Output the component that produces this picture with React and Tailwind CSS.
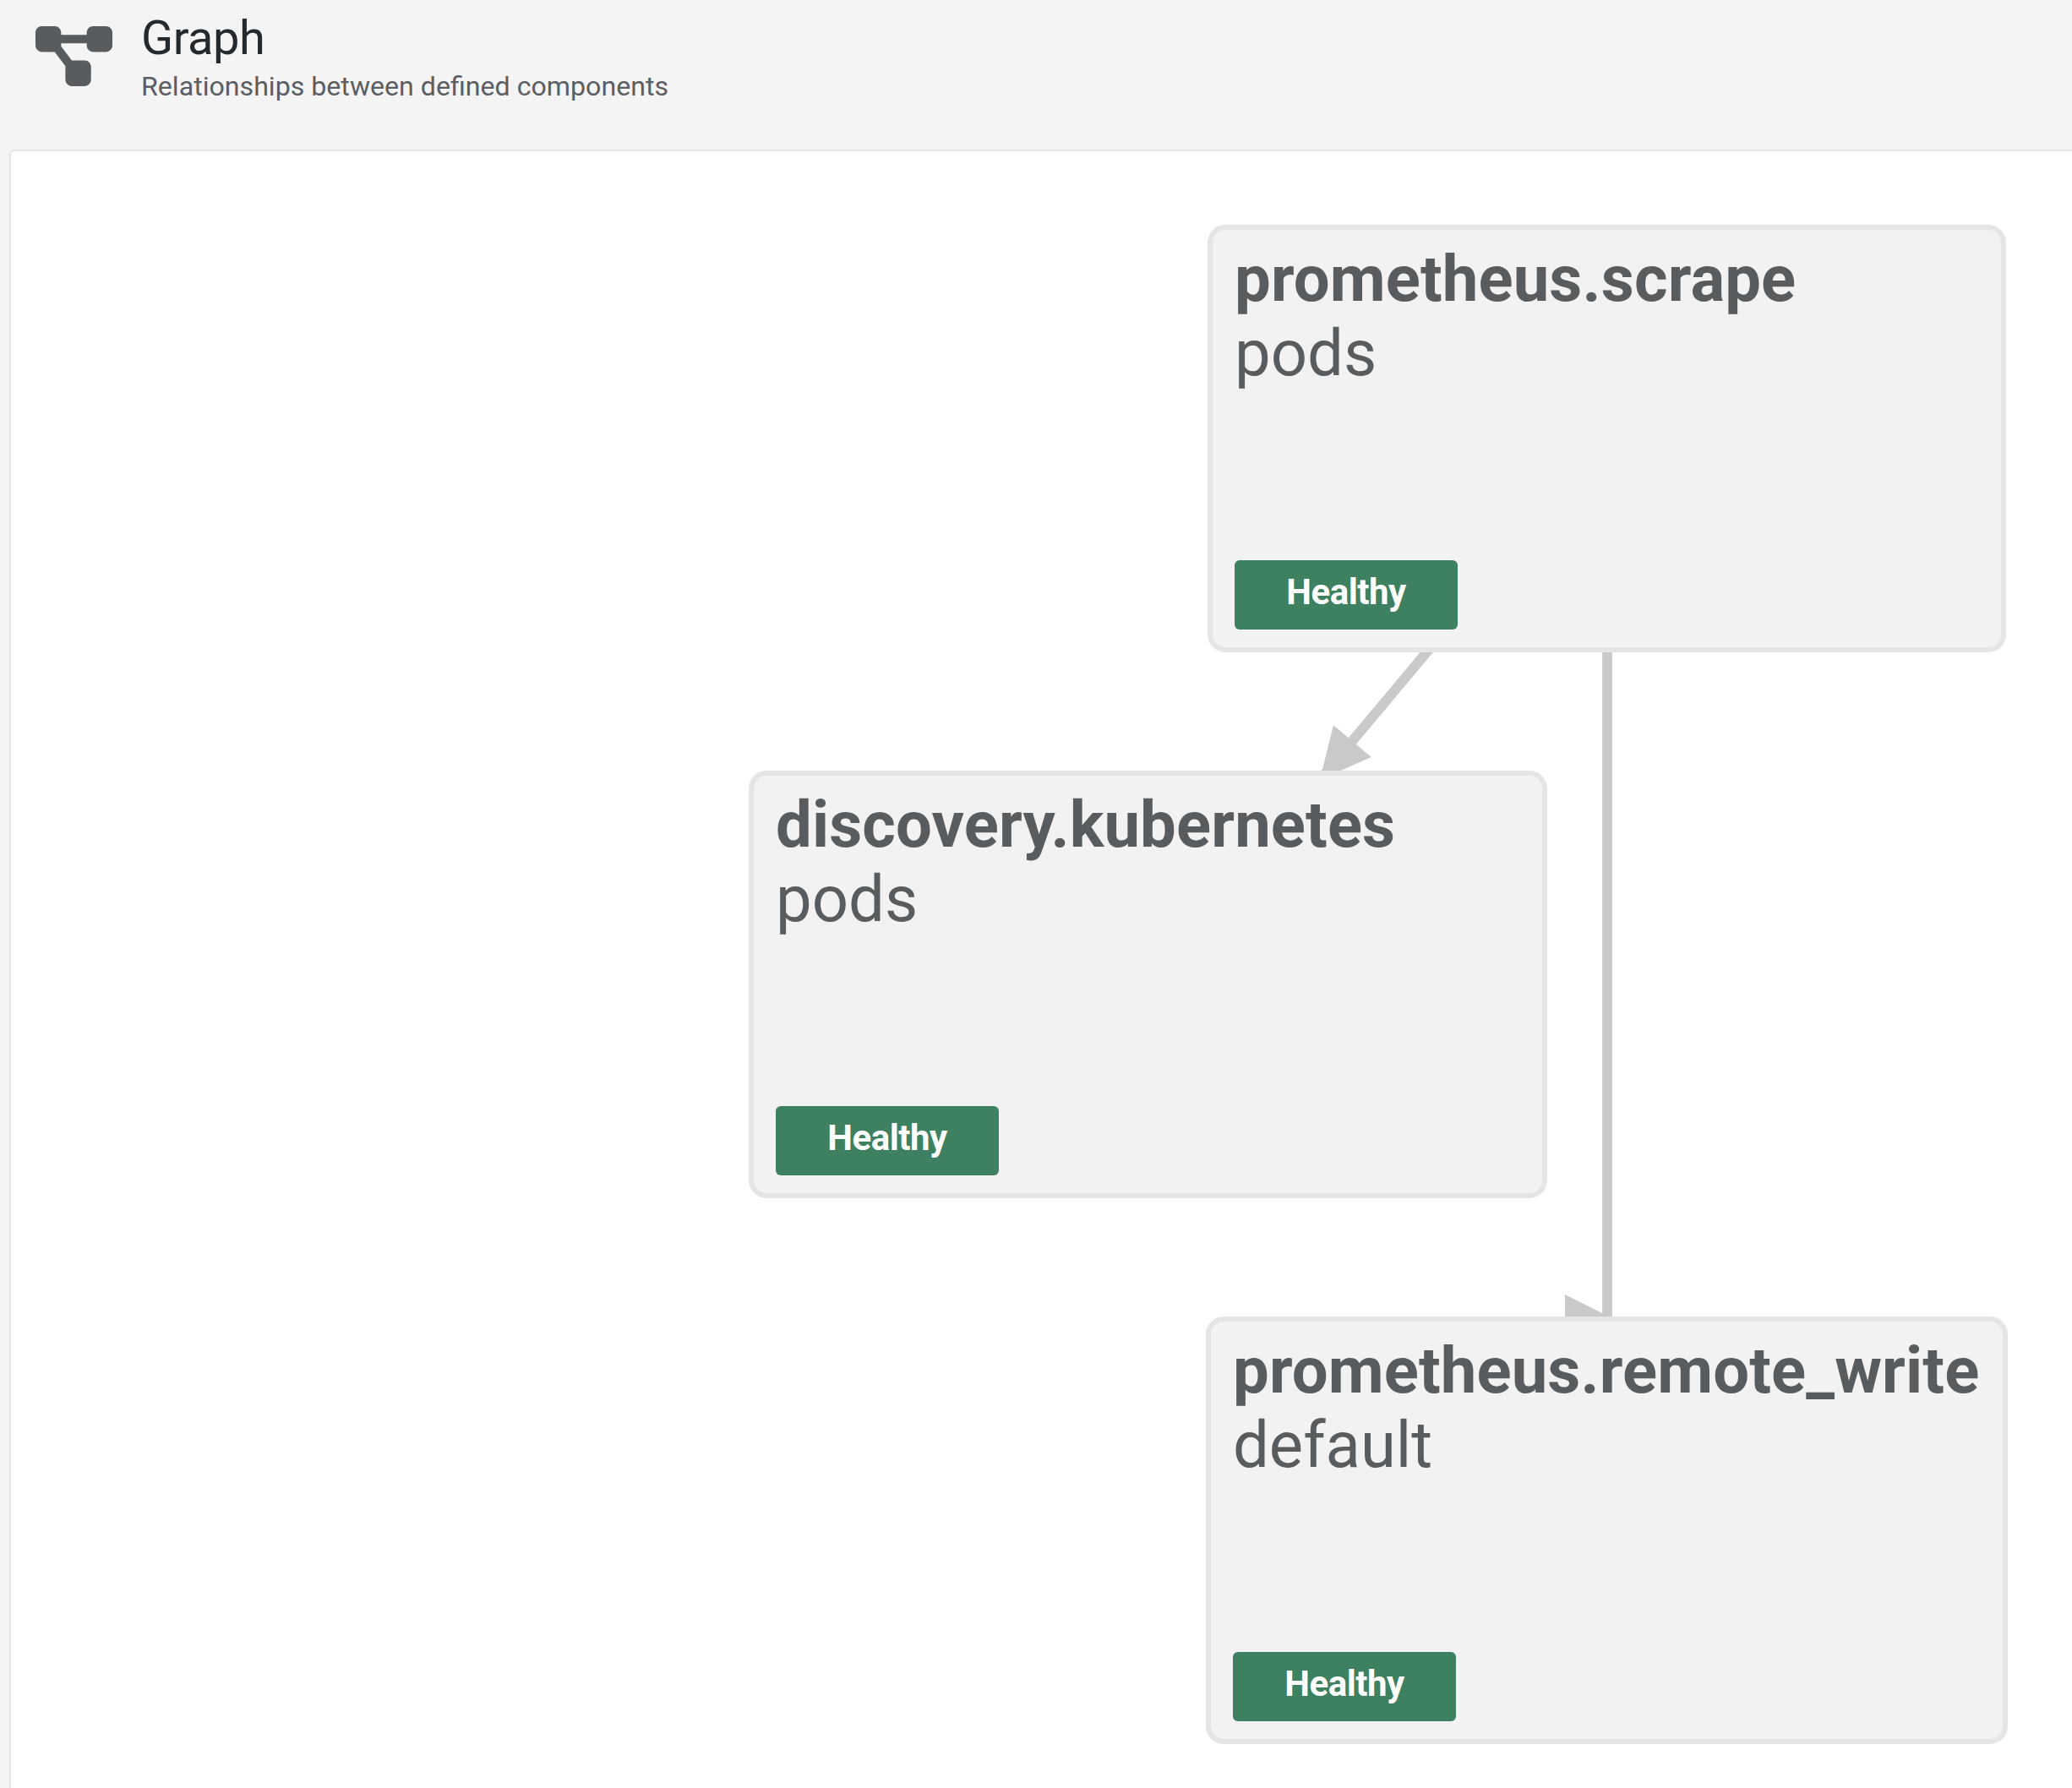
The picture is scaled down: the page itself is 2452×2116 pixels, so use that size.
const nodes = [
  { id: 'scrape', title: 'prometheus.scrape', label: 'pods', box: 'left-[1416px] top-[87px] w-[945px]' },
  { id: 'discovery', title: 'discovery.kubernetes', label: 'pods', box: 'left-[873px] top-[733px] w-[945px]' },
  { id: 'remote', title: 'prometheus.remote_write', label: 'default', box: 'left-[1414px] top-[1379px] w-[949px]' },
];

function DiagramIcon() {
  return (
    <svg viewBox="0 0 576 512" className="h-[81px] w-[91px] shrink-0 fill-[#585c5e]">
      <path d="M0 80C0 53.5 21.5 32 48 32h96c26.5 0 48 21.5 48 48V96H384V80c0-26.5 21.5-48 48-48h96c26.5 0 48 21.5 48 48v96c0 26.5-21.5 48-48 48H432c-26.5 0-48-21.5-48-48V160H192v16c0 1.7-.1 3.4-.3 5L272 288h96c26.5 0 48 21.5 48 48v96c0 26.5-21.5 48-48 48H272c-26.5 0-48-21.5-48-48V336c0-1.7 .1-3.4 .3-5L144 224H48c-26.5 0-48-21.5-48-48V80z" />
    </svg>
  );
}

function Node({ title, label, box }) {
  return (
    <div className={`absolute flex h-[506px] flex-col items-start rounded-[21px] border-6 border-[#e4e5e6] bg-[#f2f2f2] pt-[14px] pl-[26px] text-[76px] leading-[88px] whitespace-nowrap text-[#585c5e] ${box}`}>
      <div className="font-bold tracking-[0.14px]">{title}</div>
      <div>{label}</div>
      <div className="mt-auto mb-[21px] flex h-[82px] w-[264px] justify-center rounded-[6px] bg-[#3d8160] pt-[2px] text-[42px] leading-[72px] font-bold tracking-[-0.5px] text-white">
        Healthy
      </div>
    </div>
  );
}

export default function App() {
  return (
    <div className="flex h-screen flex-col overflow-hidden bg-[#f4f4f4] font-['Roboto',sans-serif]">
      <header className="flex h-[177px] shrink-0 items-start gap-[34px] pl-[42px]">
        <div className="pt-[26px]">
          <DiagramIcon />
        </div>
        <div className="pt-[12px]">
          <h1 className="text-[56px] leading-[66px] tracking-[-0.5px] text-[#24292e]">Graph</h1>
          <p className="text-[32.15px] leading-[48px] text-[#5a5d62]">Relationships between defined components</p>
        </div>
      </header>
      <main className="relative ml-[11px] grow rounded-tl-[6px] border-t-2 border-l-2 border-[#e4e5e6] bg-white">
        <svg viewBox="13 179 2439 1937" className="absolute top-0 left-0 h-[1937px] w-[2439px]">
          <g fill="#c8c9ca" stroke="none">
            <path d="M1705.8 751L1562 922.8" stroke="#c8c9ca" strokeWidth="11.7" />
            <path d="M1578 858.3L1622.7 896L1562 922.8Z" />
            <path d="M1902 768V1562" stroke="#c8c9ca" strokeWidth="11.7" />
            <path d="M1852 1532L1912 1562H1852Z" />
          </g>
        </svg>
        {nodes.map((n) => (
          <Node key={n.id} {...n} />
        ))}
      </main>
    </div>
  );
}
